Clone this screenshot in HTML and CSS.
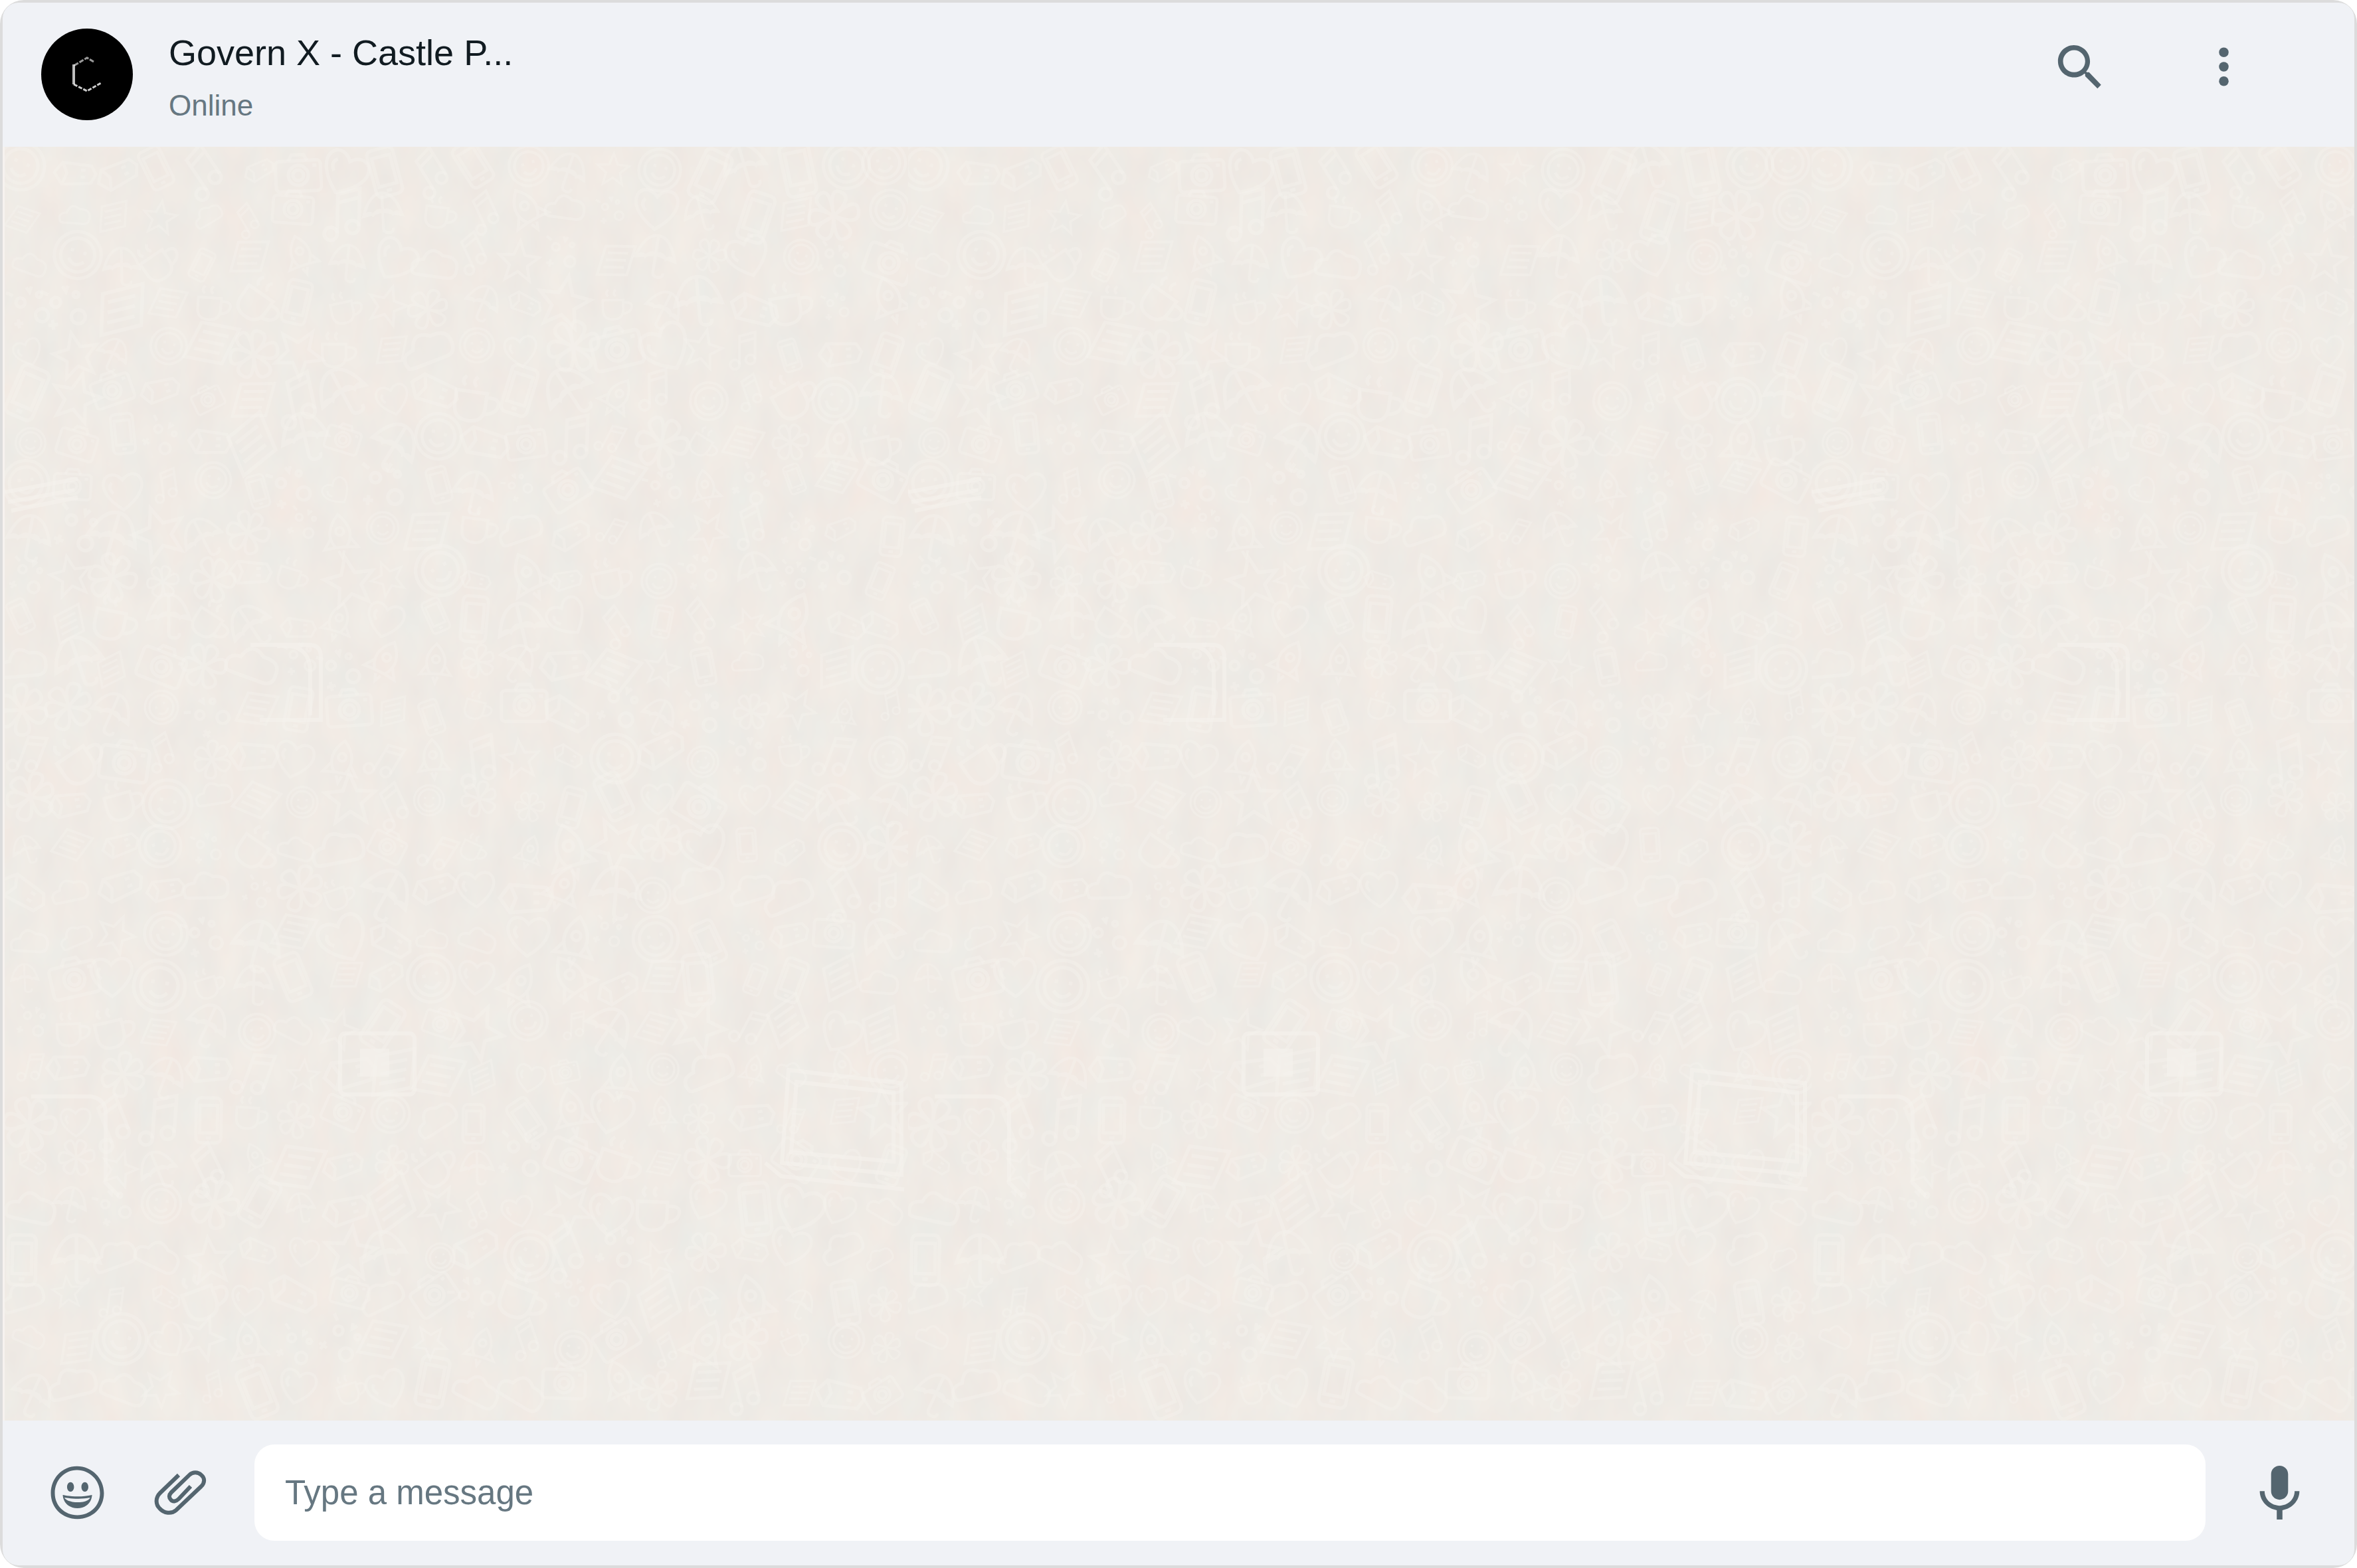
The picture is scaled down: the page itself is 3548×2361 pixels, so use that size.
FILE: index.html
```html
<!DOCTYPE html>
<html lang="en">
<head>
<meta charset="utf-8">
<title>Govern X - Castle P...</title>
<link rel="stylesheet" href="styles.css">
</head>
<body>
<div class="frame">
  <main class="card">
    <header class="header">
      <svg class="avatar" viewBox="0 0 138 138" aria-hidden="true">
        <circle cx="69" cy="69" r="69" fill="#000"/>
        <g fill="none" stroke="#fff" stroke-width="3">
          <path d="M79 50 69 44 49 56" stroke-opacity=".6" stroke-dasharray="7 2"/>
          <path d="M49 54V84" stroke-opacity=".75" stroke-width="4"/>
          <path d="M49 84 69 94 90 82" stroke-dasharray="6 2" stroke-opacity=".8"/>
        </g>
      </svg>
      <div class="contact">
        <h1 class="name">Govern X - Castle P...</h1>
        <p class="status">Online</p>
      </div>
      <div class="actions">
        <button class="icon-button" type="button" aria-label="Search">
          <svg class="icon" viewBox="0 0 24 24"><path d="M15.9,14.3H15L14.7,14c1-1.1,1.6-2.7,1.6-4.3c0-3.7-3-6.7-6.7-6.7S3,6,3,9.7s3,6.7,6.7,6.7c1.6,0,3.2-0.6,4.3-1.6l0.3,0.3v0.8l5.1,5.1l1.5-1.5L15.9,14.3z M9.7,14.3c-2.6,0-4.6-2.1-4.6-4.6s2.1-4.6,4.6-4.6s4.6,2.1,4.6,4.6S12.3,14.3,9.7,14.3z"/></svg>
        </button>
        <button class="icon-button" type="button" aria-label="Menu">
          <svg class="icon" viewBox="0 0 24 24"><circle cx="12" cy="6" r="2"/><circle cx="12" cy="12" r="2"/><circle cx="12" cy="18" r="2"/></svg>
        </button>
      </div>
    </header>

    <section class="chat" aria-label="Conversation">
      <svg class="wallpaper" aria-hidden="true">
        <defs>
          <g id="d0"><circle r="36"/><circle r="26"/><path d="M-12 8q12 14 24 0M-10-8v5M10-8v5"/></g>
          <g id="d1"><rect x="-20" y="-36" width="40" height="72" rx="8"/><path d="M-14-24h28v44h-28zM-4 28h8"/></g>
          <g id="d2"><path d="M0 32C-60-8-22-46 0-18 22-46 60-8 0 32z"/><path d="M-18-14q-8 8 2 18"/></g>
          <g id="d3"><path d="M0-36 10-11 36-9 16 8 22 34 0 19-22 34-16 8-36-9-10-11z"/></g>
          <g id="d4"><path d="M-28-12h44v20q0 22-22 22t-22-22zM16-6q20-2 18 10T14 18M-16-34q-8 8 0 14M0-34q-8 8 0 14"/></g>
          <g id="d5"><path d="M-10 26V-28l30-8v52M-10-16l30-8"/><circle cx="-19" cy="27" r="9"/><circle cx="11" cy="17" r="9"/></g>
          <g id="d6"><path d="M-34 14q-8-20 14-22 8-26 30-10 26-2 24 20 0 14-14 14h-44q-8 0-10-2z"/></g>
          <g id="d7"><rect x="-34" y="-22" width="68" height="46" rx="6"/><circle r="15"/><circle r="8"/><path d="M-14-22l5-9h18l5 9M22-14h6"/></g>
          <g id="d8"><path d="M-34 30-26-26 30-34 22 22zM-20-14l38-5M-22 0l38-5M-24 14l38-5"/></g>
          <g id="d9"><path d="M0-38Q30-8 10 20h-20Q-30-8 0-38zM-16 2l-14 20 20-2M16 2l14 20-20-2M-5 26l5 12 5-12"/><circle cy="-8" r="7"/></g>
          <g id="d10"><path d="M-34 8Q-22-32 0-32T34 8L0 0zM0-32v62q0 8 9 8t8-8M-34 8q12-10 17-2 10-12 17-6 12-6 18 6 8-8 16 2"/></g>
          <g id="d11"><path d="M0 0q-26-30-8-36T0 0q8-42 22-28T0 0q42-16 36 6T0 0q26 32 6 36T0 0q-16 40-28 22T0 0q-42 10-34-10T0 0z"/></g>
          <g id="d12"><path d="M-36 0l14-18 50 4 8 14-8 16-50 4zM-22-18l8 18-8 20M10-6h8M10 6h8"/></g>
          <g id="d13"><circle r="7" cx="-16" cy="-12"/><circle r="4" cx="14" cy="-20"/><circle r="10" cx="14" cy="12"/><path d="M-30 20h14M-23 13v14M-4-34l4 8 4-8M-36-30l10 6"/></g>
          <filter id="mottle" x="0" y="0" width="100%" height="100%" color-interpolation-filters="sRGB">
            <feTurbulence type="fractalNoise" baseFrequency="0.022 0.012" numOctaves="3" seed="8" stitchTiles="stitch"/>
            <feColorMatrix values="0.04 0 0 0 0.918  0.01 0.03 0 0 0.900  0 0.03 0 0 0.883  0 0 0 0 1"/>
          </filter>
          <pattern id="tile" width="1360" height="1920" patternUnits="userSpaceOnUse">
            <rect width="1360" height="1920" filter="url(#mottle)"/>
            <g id="doodles" class="doodles"></g>
            <g class="doodles doodles-large">
              <path d="M1180 1390 1350 1410V1548L1170 1530zM1192 1408 1338 1424V1528L1184 1514zM1145 1530l24 20 185 20M40 1430h90q24 4 22 30v100l20 20"/>
              <rect x="505" y="1335" width="112" height="92" rx="8"/>
              <path d="M370 750h88q18 0 18 18v95h-92M410 752q50-6 50 40v64M0 520l110-20M5 535l100-18M10 548l100-20"/>
            </g>
            <rect x="535" y="1358" width="44" height="42" fill="#f5f2ed" fill-opacity=".6"/>
          </pattern>
        </defs>
        <rect width="100%" height="100%" fill="url(#tile)"/>
      </svg>
    </section>

    <footer class="composer">
      <button class="icon-button" type="button" aria-label="Emoji">
        <svg class="icon" viewBox="0 0 24 24"><path d="M9.153,11.603c0.795,0,1.439-0.879,1.439-1.962S9.948,7.679,9.153,7.679S7.714,8.558,7.714,9.641S8.358,11.603,9.153,11.603z M5.949,12.965c-0.026-0.307-0.131,5.218,6.063,5.551c6.066-0.25,6.066-5.551,6.066-5.551C12,14.381,5.949,12.965,5.949,12.965z M17.312,14.073c0,0-0.669,1.959-5.051,1.959c-3.505,0-5.388-1.164-5.607-1.959C6.654,14.073,12.566,15.128,17.312,14.073z M11.804,1.011c-6.195,0-10.826,5.022-10.826,11.217s4.826,10.761,11.021,10.761S23.02,18.423,23.02,12.228C23.021,6.033,17.999,1.011,11.804,1.011z M12,21.354c-5.273,0-9.381-3.886-9.381-9.159s3.942-9.548,9.215-9.548s9.548,4.275,9.548,9.548C21.381,17.467,17.273,21.354,12,21.354z M15.108,11.603c0.795,0,1.439-0.879,1.439-1.962s-0.644-1.962-1.439-1.962s-1.439,0.879-1.439,1.962S14.313,11.603,15.108,11.603z"/></svg>
      </button>
      <button class="icon-button" type="button" aria-label="Attach">
        <svg class="icon icon-line" viewBox="0 0 87 87"><path d="M41 17 13 44C5 52 7 62 12 67C19 75 30 76 37 70L75 34C81 28 80 21 75 17C70 12 62 12 57 17L30 43C26 47 26 51 29 54C32 58 37 57 41 53L59 34"/></svg>
      </button>
      <input class="message" type="text" placeholder="Type a message" aria-label="Type a message">
      <button class="icon-button" type="button" aria-label="Record voice message">
        <svg class="icon" viewBox="0 0 24 24"><path d="M11.999,14.942c2.001,0,3.531-1.53,3.531-3.531V4.35c0-2.001-1.53-3.531-3.531-3.531S8.469,2.35,8.469,4.35v7.061C8.469,13.412,9.999,14.942,11.999,14.942z M18.237,11.412c0,3.531-2.942,6.002-6.237,6.002s-6.237-2.471-6.237-6.002H3.761c0,4.001,3.178,7.297,7.061,7.885v3.884h2.354v-3.884c3.884-0.588,7.061-3.884,7.061-7.885L18.237,11.412z"/></svg>
      </button>
    </footer>
  </main>
</div>
<script src="wallpaper.js"></script>
</body>
</html>
```

FILE: styles.css
```css
* {
  box-sizing: border-box;
}

body {
  margin: 0;
  background: #fff;
  font-family: "Liberation Sans", Arial, sans-serif;
}

.frame {
  display: flex;
  min-height: 100vh;
  padding: 4px;
  border-radius: 36px;
  background: #dcdcdc;
}

.card {
  display: flex;
  flex: 1;
  flex-direction: column;
  min-width: 0;
  overflow: hidden;
  border-radius: 24px;
  background: #f0f2f6;
}

.header {
  display: flex;
  align-items: flex-start;
  padding: 39px 153px 26px 58px;
}

.avatar {
  flex: none;
  width: 138px;
  height: 138px;
}

.contact {
  flex: 1;
  min-width: 0;
  margin-left: 54px;
}

.name {
  margin: 0;
  color: #111b21;
  font-size: 54px;
  font-weight: 400;
  line-height: 72px;
}

.status {
  margin: 8px 0 0;
  color: #667781;
  font-size: 44px;
  line-height: 72px;
}

.actions {
  display: flex;
  gap: 130px;
  margin-top: 14px;
}

.icon-button {
  flex: none;
  padding: 0;
  border: 0;
  background: none;
  color: #54656f;
  cursor: pointer;
}

.icon {
  display: block;
  width: 87px;
  height: 87px;
  fill: currentColor;
}

.icon-line {
  fill: none;
  stroke: currentColor;
  stroke-width: 6;
}

.chat {
  position: relative;
  flex: 1;
  border-left: 3px solid #f6f2ef;
  background: #efeae5;
}

.wallpaper {
  position: absolute;
  inset: 0;
  width: 100%;
  height: 100%;
}

.doodles {
  fill: none;
  stroke: #f5f2ed;
  stroke-width: 5;
  stroke-opacity: 0.4;
}

.doodles-large {
  stroke-width: 6;
  stroke-opacity: 0.6;
}

.composer {
  display: flex;
  align-items: center;
  gap: 68px;
  padding: 36px 69px 37px;
}

.message {
  flex: 1;
  min-width: 0;
  height: 145px;
  padding: 0 46px;
  border: 0;
  border-radius: 30px;
  background: #fff;
  color: #111b21;
  font-family: inherit;
  font-size: 51px;
}

.message::placeholder {
  color: #667781;
  opacity: 1;
}
```

FILE: wallpaper.js
```js
// Scatters the doodle shapes over one wallpaper tile, the same way each time.
const layer = document.getElementById("doodles");
let seed = 17;

function random() {
  seed = (seed * 16807) % 2147483647;
  return seed / 2147483647;
}

const cell = 68;
for (let y = 34; y < 1920; y += cell) {
  for (let x = 34; x < 1360; x += cell) {
    const shape = document.createElementNS("http://www.w3.org/2000/svg", "use");
    const dx = x + Math.round(random() * 20 - 10);
    const dy = y + Math.round(random() * 20 - 10);
    const angle = Math.round(random() * 70 - 35);
    const scale = 0.6 + random() * 0.5;
    shape.setAttribute("href", "#d" + Math.floor(random() * 14));
    shape.setAttribute("transform", `translate(${dx} ${dy}) rotate(${angle}) scale(${scale.toFixed(2)})`);
    layer.append(shape);
  }
}
```
